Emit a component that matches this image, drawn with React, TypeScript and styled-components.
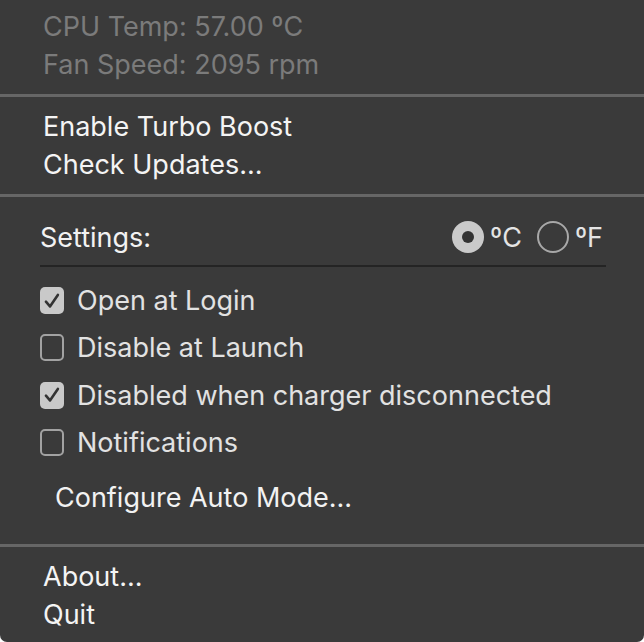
import React from "react";
import styled, { createGlobalStyle } from "styled-components";

const Global = createGlobalStyle`
  html, body { margin: 0; padding: 0; background: #ffffff; }
  body { font-family: Inter, "Noto Sans", sans-serif; }
`;

const Menu = styled.div`
  width: 644px;
  height: 642px;
  box-sizing: border-box;
  background: #3a3a3a;
  border-radius: 0 0 7px 7px;
  display: flex;
  flex-direction: column;
  overflow: hidden;
`;

const Section = styled.div<{ $pt?: number; $pb?: number }>`
  display: flex;
  flex-direction: column;
  padding-top: ${(p) => p.$pt ?? 0}px;
  padding-bottom: ${(p) => p.$pb ?? 0}px;
`;

const Item = styled.div<{ $disabled?: boolean; $indent?: number }>`
  height: 38px;
  display: flex;
  align-items: center;
  padding-left: ${(p) => p.$indent ?? 43}px;
  font-size: 27px;
  color: ${(p) => (p.$disabled ? "#7b7b7b" : "#f4f4f4")};
  white-space: nowrap;
`;

const Separator = styled.div`
  height: 3px;
  background: #666666;
  margin: 11px 0 10px;
`;

const Settings = styled.div`
  display: flex;
  flex-direction: column;
  padding: 10px 38px 0 40px;
`;

const HeaderRow = styled.div`
  height: 40px;
  display: flex;
  align-items: center;
  justify-content: space-between;
  font-size: 27px;
  color: #f2f2f2;
`;

const Radios = styled.div`
  display: flex;
  align-items: center;
  gap: 15px;
  margin-right: 3px;
`;

const RadioOption = styled.div`
  display: flex;
  align-items: center;
  gap: 6px;
  color: #e4e4e4;
`;

const RadioCircle = styled.div<{ $on?: boolean }>`
  width: 32px;
  height: 32px;
  border-radius: 50%;
  box-sizing: border-box;
  background: ${(p) => (p.$on ? "#cacaca" : "transparent")};
  border: ${(p) => (p.$on ? "none" : "2px solid #a8a8a8")};
  display: flex;
  align-items: center;
  justify-content: center;
  &::after {
    content: "";
    display: ${(p) => (p.$on ? "block" : "none")};
    width: 12px;
    height: 12px;
    border-radius: 50%;
    background: #333333;
  }
`;

const Underline = styled.div`
  height: 2px;
  background: #242424;
  margin: 8px 0 10px;
`;

const CheckRow = styled.div`
  height: 47.3px;
  display: flex;
  align-items: center;
  gap: 13px;
  font-size: 27px;
  color: #e2e2e2;
  white-space: nowrap;
`;

const Box = styled.div<{ $on?: boolean }>`
  width: 24px;
  height: 27px;
  box-sizing: border-box;
  border-radius: 5px;
  background: ${(p) => (p.$on ? "#c9c9c9" : "transparent")};
  border: ${(p) => (p.$on ? "none" : "2px solid #a2a2a2")};
  display: flex;
  align-items: center;
  justify-content: center;
  flex: none;
`;

const ConfigureItem = styled(Item)`
  margin-top: 12px;
  margin-bottom: 17px;
  color: #f2f2f2;
`;

const Check = () => (
  <svg width="18" height="18" viewBox="0 0 16 16">
    <path d="M2.6 8.6 L6.2 12.8 L13.2 2.6" fill="none" stroke="#333" strokeWidth="2.3" strokeLinecap="round" strokeLinejoin="round" />
  </svg>
);

const CheckItem = ({ on, label }: { on?: boolean; label: string }) => (
  <CheckRow>
    <Box $on={on}>{on && <Check />}</Box>
    <span>{label}</span>
  </CheckRow>
);

export default function App() {
  return (
    <>
      <Global />
      <Menu>
        <Section $pt={7}>
          <Item $disabled>CPU Temp: 57.00 ºC</Item>
          <Item $disabled>Fan Speed: 2095 rpm</Item>
        </Section>
        <Separator />
        <Section>
          <Item>Enable Turbo Boost</Item>
          <Item>Check Updates...</Item>
        </Section>
        <Separator />
        <Settings>
          <HeaderRow>
            <span>Settings:</span>
            <Radios>
              <RadioOption>
                <RadioCircle $on />
                <span>ºC</span>
              </RadioOption>
              <RadioOption>
                <RadioCircle />
                <span>ºF</span>
              </RadioOption>
            </Radios>
          </HeaderRow>
          <Underline />
          <CheckItem on label="Open at Login" />
          <CheckItem label="Disable at Launch" />
          <CheckItem on label="Disabled when charger disconnected" />
          <CheckItem label="Notifications" />
        </Settings>
        <ConfigureItem $indent={55}>Configure Auto Mode...</ConfigureItem>
        <Separator />
        <Section>
          <Item>About...</Item>
          <Item>Quit</Item>
        </Section>
      </Menu>
    </>
  );
}
